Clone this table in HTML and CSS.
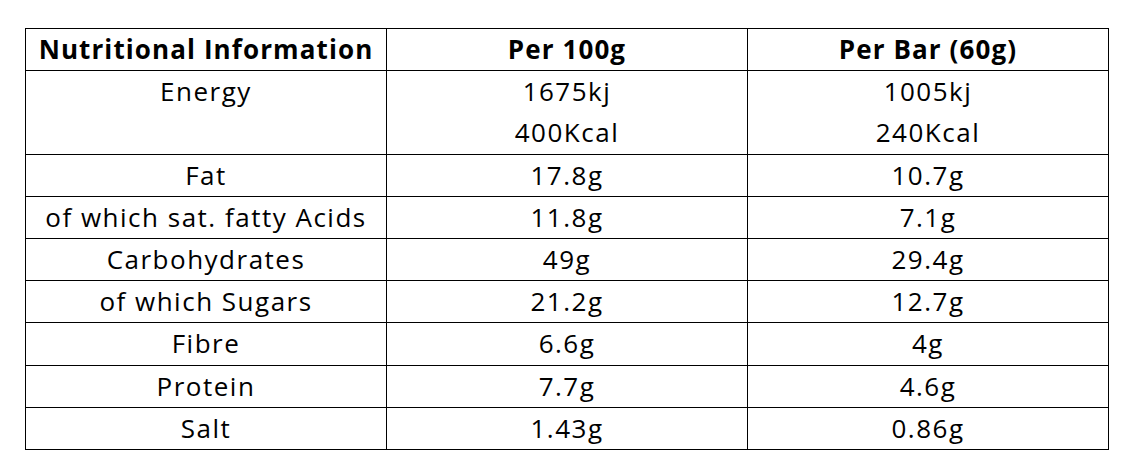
FILE: index.html
```html
<!DOCTYPE html>
<html lang="en">

<head>
    <meta charset="UTF-8">
    <meta name="viewport" content="width=device-width, initial-scale=1.0">
    <title>Nutritional Information</title>
    <link rel="stylesheet" href="styles.css">
</head>

<body>

    <table class="nutrition">
        <thead>
            <tr>
                <th>Nutritional Information</th>
                <th>Per 100g</th>
                <th>Per Bar (60g)</th>
            </tr>
        </thead>
        <tbody>
            <tr>
                <td>Energy<br>&nbsp;</td>
                <td>1675kj<br>400Kcal</td>
                <td>1005kj<br>240Kcal</td>
            </tr>
            <tr>
                <td>Fat</td>
                <td>17.8g</td>
                <td>10.7g</td>
            </tr>
            <tr>
                <td>of which sat. fatty Acids</td>
                <td>11.8g</td>
                <td>7.1g</td>
            </tr>
            <tr>
                <td>Carbohydrates</td>
                <td>49g</td>
                <td>29.4g</td>
            </tr>
            <tr>
                <td>of which Sugars</td>
                <td>21.2g</td>
                <td>12.7g</td>
            </tr>
            <tr>
                <td>Fibre</td>
                <td>6.6g</td>
                <td>4g</td>
            </tr>
            <tr>
                <td>Protein</td>
                <td>7.7g</td>
                <td>4.6g</td>
            </tr>
            <tr>
                <td>Salt</td>
                <td>1.43g</td>
                <td>0.86g</td>
            </tr>
        </tbody>
    </table>

</body>

</html>
```

FILE: styles.css
```css
body {
    font-family: "Open Sans", Lato, sans-serif;
    margin: 0;
    padding: 28px 0 0 25px;
    background: #fff;
    color: #000;
}

.nutrition {
    border-collapse: collapse;
    table-layout: fixed;
    width: 1084px;
}

.nutrition th,
.nutrition td {
    border: 1px solid #000;
    padding: 0;
    text-align: center;
    font-size: 26px;
    line-height: 41.2px;
}

.nutrition th {
    font-weight: bold;
    letter-spacing: 1.1px;
}

.nutrition td {
    font-weight: normal;
    letter-spacing: 1.5px;
}
```
